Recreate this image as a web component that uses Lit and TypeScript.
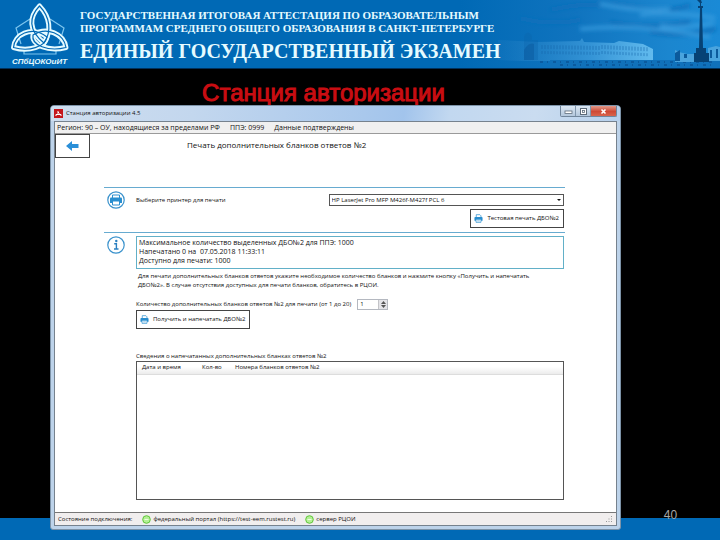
import { LitElement, html, css, svg } from "lit";
import { customElement, state } from "lit/decorators.js";

const printer = (cls: string) => html`<svg class=${cls} viewBox="0 0 20 20" aria-hidden="true">
  <path d="M5 7V1.500h8l2.500 2.500V7" fill="#fff" stroke="#2a8fd0" stroke-width="1.600" />
  <path d="M3 6.500h14a2 2 0 0 1 2 2V15h-3.500v-3h-11v3H1V8.500a2 2 0 0 1 2-2z" fill="#2a8fd0" />
  <path d="M4.500 12h11v6.500h-11z" fill="#fff" stroke="#2a8fd0" stroke-width="1.600" />
  <path d="M7 15.200h6" stroke="#2a8fd0" stroke-width="1.200" />
</svg>`;

@customElement("site-banner")
class SiteBanner extends LitElement {
  static styles = css`
    :host {
      display: flex;
      position: relative;
      height: 69px;
      background: #0069b5;
      border-bottom: 1px solid #00315c;
      box-sizing: border-box;
      overflow: hidden;
      color: #e6fbff;
    }
    .logo { width: 80px; height: 68px; flex: none; }
    .texts { padding-top: 9px; font-family: "Liberation Serif", serif; font-weight: 700; white-space: nowrap; z-index: 1; }
    .small { margin: 0; font-size: 11px; line-height: 13px; }
    .big { margin: 0; padding-top: 4px; font-size: 20px; line-height: 24px; }
    .scene { position: absolute; right: 0; top: 0; width: 260px; height: 68px; }
    .mark { font: italic 700 8px "Liberation Sans", sans-serif; }
  `;
  render() {
    const windows = [];
    for (let i = 0; i < 36; i++) windows.push(svg`<path d=${`M${82 + i * 3} ${45 + (i < 20 ? i * 0.05 : (i - 20) * 0.15)}v4m0 2v3`} />`);
    const loops = [
      "M39.500 6C29 17 28 30 44 43C52 31 50 17 39.500 6z",
      "M13.500 47.500C14 35 31 25 47 37C45 47 29 52 13.500 47.500z",
      "M66 47.500C64 34 47 26 33 35C31 45 48 52 66 47.500z",
    ];
    return html`
      <svg class="logo" viewBox="0 0 80 68" role="img" aria-label="СПбЦОКОиИТ">
        <path d="M30 19L16 28l5 16M50 19l14 9-5 16M24 51v3h32v-3" fill="none" stroke="#7cc5ee" stroke-width="1.200" />
        <g fill="none" stroke="#e6fbff" stroke-width="5" stroke-linejoin="round">${loops.map((d) => svg`<path d=${d} />`)}</g>
        <g fill="none" stroke="#0069b5" stroke-width="1.200" stroke-linejoin="round">${loops.map((d) => svg`<path d=${d} />`)}</g>
        <text class="mark" x="39.500" y="64" text-anchor="middle" fill="#e6fbff">СПбЦОКОиИТ</text>
      </svg>
      <div class="texts">
        <p class="small">ГОСУДАРСТВЕННАЯ ИТОГОВАЯ АТТЕСТАЦИЯ ПО ОБРАЗОВАТЕЛЬНЫМ</p>
        <p class="small">ПРОГРАММАМ СРЕДНЕГО ОБЩЕГО ОБРАЗОВАНИЯ В САНКТ-ПЕТЕРБУРГЕ</p>
        <p class="big">ЕДИНЫЙ ГОСУДАРСТВЕННЫЙ ЭКЗАМЕН</p>
      </div>
      <svg class="scene" viewBox="0 0 260 68" aria-hidden="true">
        <defs>
          <linearGradient id="sky"><stop offset="0" stop-color="#0069b5" /><stop offset=".45" stop-color="#1074bf" /><stop offset=".8" stop-color="#1b86cf" /><stop offset="1" stop-color="#1a8ad6" /></linearGradient>
          <linearGradient id="wall"><stop offset="0" stop-color="#2580c4" stop-opacity=".2" /><stop offset=".6" stop-color="#3494d6" /><stop offset="1" stop-color="#62bbee" /></linearGradient>
          <filter id="soft"><feGaussianBlur stdDeviation="2" /></filter>
        </defs>
        <rect width="260" height="68" fill="url(#sky)" />
        <g filter="url(#soft)" fill="none">
          <path d="M90 10q40-9 80-3t60-2M150 22q30 8 80 0M190 32q30 6 66-3M60 18q30 8 60 2" stroke="#0f70bb" stroke-width="4" />
          <path d="M140 4q40 8 70 5M180 15q30-4 75 3M120 29q60-6 130 8M200 26q20 3 54-3" stroke="#3a9ee0" stroke-width="3" />
        </g>
        <path d="M38 40l40 2 42-1 2-3 2 4 30 1 5-2 24 3 10 5v12H62l-24-1z" fill="url(#wall)" />
        <g stroke="#1566ab" stroke-width="1" opacity=".6">${windows}</g>
        <path d="M64 36q4-7 8 0v4h6v20H64z" fill="#0c65ab" opacity=".35" />
        <path d="M64 50q5-8 10-6v16H64z" fill="#0a5a9d" opacity=".5" />
        <path d="M90 60h170v8H90z" fill="#1071bb" />
        <path d="M80 62h175M100 65h155" stroke="#0a5396" stroke-width="2" stroke-dasharray="3 4 1 5" opacity=".7" />
        <path d="M215 50l4 2 8 2 8 0v8h-20zM248 48l8-2 4 1v14h-12z" fill="#4aa4de" />
        <path d="M215 53l5-3v11h-5zM224 54h3v4h-3zM250 50h2v8h-2zM256 49h2v9h-2z" fill="#0b5a9c" />
        <path d="M237 0h4l1 3h-1v3h2v2h-1l1 40h3v5h3v9h-15v-9h2v-5h3l1-40h-2V6h2V3z" fill="#064275" />
      </svg>`;
  }
}

@customElement("station-window")
class StationWindow extends LitElement {
  static styles = css`
    :host {
      display: flex;
      flex-direction: column;
      box-sizing: border-box;
      border: 1px solid #7d93a8;
      border-radius: 4px 4px 3px 3px;
      background: #bdd3ea;
      padding: 0 3px 3px;
      font-family: "Open Sans", "Noto Sans", sans-serif;
      font-size: 6px;
      line-height: 9px;
      color: #111;
    }
    * { box-sizing: border-box; }
    p, h2 { margin: 0; font-weight: 400; }
    button, select, input { font: inherit; color: inherit; margin: 0; border-radius: 0; }
    .titlebar {
      display: flex;
      align-items: center;
      gap: 3px;
      height: 15px;
      margin: 0 -3px;
      padding: 0 3px;
      border-radius: 3px 3px 0 0;
      background: linear-gradient(100deg, #cfdeef 0, #c3d7ee 25%, #a9c8ec 55%, #a2c4ec 62%, #c2d8f0 70%, #cadcf0 85%, #b6d0ec 100%);
    }
    .app { width: 9px; height: 9px; }
    .caption { flex: 1; }
    .controls { display: flex; align-self: flex-start; border: 1px solid #71869c; border-top: 0; border-radius: 0 0 2px 2px; }
    .ctl { display: flex; align-items: center; justify-content: center; width: 15px; height: 10px; padding: 0; border: 0; border-right: 1px solid #8096ac; background: linear-gradient(#dbe7f3, #b3c7dc); }
    .close { width: 25px; border-right: 0; background: linear-gradient(#e39a8a, #cf4a35 55%, #d9644c); }
    .ctl svg { width: 9px; height: 7px; }
    .client { flex: 1; display: flex; flex-direction: column; border: 1px solid #76828e; background: #fff; }
    .region { display: flex; gap: 10px; height: 12px; padding: 0 2px; align-items: center; background: #f0f0f0; border-bottom: 1px solid #9a9a9a; font-size: 7px; white-space: pre; }
    .head { display: flex; align-items: center; gap: 97px; }
    .back { width: 35px; height: 24px; padding: 0; border: 1px solid #444; background: #fff; display: flex; align-items: center; justify-content: center; }
    .back svg { width: 13px; height: 10px; }
    .head h2 { font-size: 8px; line-height: 12px; padding-bottom: 2px; }
    .body { flex: 1; display: flex; flex-direction: column; padding: 29px 51px 12px 49px; }
    .section { display: grid; grid-template-columns: 32px 1fr; border-top: 1px solid #67abd0; }
    .section > svg { width: 18px; height: 18px; margin: 3px; }
    .printer { display: flex; flex-direction: column; align-items: flex-end; gap: 3px; padding: 6px 1px 4px 0; }
    .row { display: flex; align-items: center; width: 100%; }
    .row label { flex: 1; }
    .pick { position: relative; flex: 0 0 55%; display: flex; }
    select { appearance: none; width: 100%; height: 12px; padding: 0 2px; border: 1px solid #555; background: #fff; }
    .pick::after { content: ""; position: absolute; right: 3px; top: 5px; border: 2px solid transparent; border-top-color: #111; border-bottom: 0; pointer-events: none; }
    .action { display: flex; align-items: center; gap: 4px; height: 19px; padding: 0 4px 0 3px; border: 1px solid #444; background: #fff; white-space: nowrap; }
    .glyph { width: 9px; height: 9px; }
    .details { padding: 3px 1px 0 0; }
    .info { border: 1px solid #62b0c8; padding: 1px 2px 2px; height: 33px; font-size: 7px; line-height: 9px; white-space: pre; }
    .hint { padding: 3px 20px 9px 2px; }
    .count { display: flex; align-items: center; gap: 6px; height: 11px; }
    .spin { display: flex; width: 31px; height: 11px; border: 1px solid #b4b8c0; }
    .spin input { flex: 1; min-width: 0; border: 0; padding: 0 2px; appearance: textfield; background: #fff; outline: 0; }
    .spin input::-webkit-inner-spin-button { display: none; }
    .arrows { display: flex; flex-direction: column; width: 9px; border-left: 1px solid #c4c4c8; }
    .arrows button { flex: 1; min-height: 0; padding: 0; border: 0; background: #e4e4e8; display: flex; align-items: center; justify-content: center; }
    .arrows svg { width: 5px; height: 3px; display: block; }
    .table-area { flex: 1; display: flex; flex-direction: column; margin: 23px 1px 0 32px; }
    .frame { flex: 1; min-height: 100px; border: 1px solid #555; }
    table { width: 100%; border-collapse: collapse; table-layout: fixed; }
    th { height: 12px; padding: 0 5px; text-align: left; font-weight: 400; background: linear-gradient(#fff 40%, #ececec); border-bottom: 1px solid #ddd; }
    .date { width: 60px; }
    .qty { width: 33px; }
    .status { display: flex; align-items: center; height: 13px; padding: 0 3px; gap: 10px; background: #f1eeee; border-top: 1px solid #777; }
    .link { display: flex; align-items: center; gap: 2px; }
    .link svg { width: 9px; height: 9px; }
    .grip { margin-left: auto; width: 7px; height: 7px; }
  `;

  @state() private copies = 1;

  private step(n: number) {
    this.copies = Math.min(20, Math.max(1, this.copies + n));
  }

  render() {
    const dot = html`<svg viewBox="0 0 9 9" aria-hidden="true"><circle cx="4.500" cy="4.500" r="3.800" fill="#b5f096" stroke="#5fc63a" stroke-width="1" /><path d="M2.500 4.500h4" stroke="#e9ffde" /></svg>`;
    return html`
      <header class="titlebar">
        <svg class="app" viewBox="0 0 9 9" aria-hidden="true"><rect width="9" height="9" fill="#c4161c" /><path d="M2 7V5.500h5V7M4 2v3M5.500 4.500L4 3" stroke="#fff" fill="none" /></svg>
        <span class="caption">Станция авторизации 4.5</span>
        <div class="controls">
          <button class="ctl" aria-label="Свернуть"><svg viewBox="0 0 9 7"><rect x="1" y="3" width="7" height="2.500" fill="#fff" stroke="#5d6b7a" stroke-width=".8" /></svg></button>
          <button class="ctl" aria-label="Развернуть"><svg viewBox="0 0 9 7"><rect x="1.500" y=".5" width="6" height="6" fill="#fff" stroke="#5d6b7a" /><rect x="3.500" y="2.500" width="2" height="2" fill="none" stroke="#5d6b7a" stroke-width=".8" /></svg></button>
          <button class="ctl close" aria-label="Закрыть"><svg viewBox="0 0 9 7"><path d="M2.500 1.500l4 4M6.500 1.500l-4 4" stroke="#fff" stroke-width="1.600" /></svg></button>
        </div>
      </header>
      <div class="client">
        <div class="region"><span>Регион: 90 – ОУ, находящиеся за пределами РФ</span><span>ППЭ: 0999</span><span>Данные подтверждены</span></div>
        <div class="head">
          <button class="back" aria-label="Назад"><svg viewBox="0 0 13 10"><path d="M0 5l6-5v3h6.500v4H6v3z" fill="#2a8fd8" /></svg></button>
          <h2>Печать дополнительных бланков ответов №2</h2>
        </div>
        <div class="body">
          <section class="section">
            <svg viewBox="0 0 18 18" aria-hidden="true">
              <circle cx="9" cy="9" r="8.200" fill="#fff" stroke="#3a92cc" stroke-width="1.200" />
              <path d="M5.500 7V4h7v3" fill="#fff" stroke="#2a8fd0" />
              <path d="M4 6.500h10a1 1 0 0 1 1 1V12H3V7.500a1 1 0 0 1 1-1z" fill="#2a8fd0" />
              <path d="M5.500 10h7v4h-7z" fill="#fff" stroke="#2a8fd0" />
            </svg>
            <div class="printer">
              <div class="row">
                <label for="printer">Выберите принтер для печати</label>
                <div class="pick"><select id="printer"><option>HP LaserJet Pro MFP M426f-M427f PCL 6</option></select></div>
              </div>
              <button class="action">${printer("glyph")}Тестовая печать ДБО№2</button>
            </div>
          </section>
          <section class="section">
            <svg viewBox="0 0 18 18" aria-hidden="true">
              <circle cx="9" cy="9" r="8.200" fill="#fff" stroke="#3a92cc" stroke-width="1.200" />
              <circle cx="9.300" cy="5" r="1.200" fill="#2a7fc0" />
              <path d="M7.200 7.800h2.200v5M7 13h4.500" fill="none" stroke="#2a7fc0" stroke-width="1.400" />
            </svg>
            <div class="details">
              <div class="info"><p>Максимальное количество выделенных ДБО№2 для ППЭ: 1000</p><p>Напечатано 0 на  07.05.2018 11:33:11</p><p>Доступно для печати: 1000</p></div>
              <p class="hint">Для печати дополнительных бланков ответов укажите необходимое количество бланков и нажмите кнопку «Получить и напечатать ДБО№2». В случае отсутствия доступных для печати бланков, обратитесь в РЦОИ.</p>
              <div class="count">
                <label for="copies">Количество дополнительных бланков ответов №2 для печати (от 1 до 20)</label>
                <div class="spin">
                  <input id="copies" type="number" min="1" max="20" .value=${String(this.copies)} @change=${(e: Event) => (this.copies = Number((e.target as HTMLInputElement).value) || 1)} />
                  <span class="arrows">
                    <button aria-label="Больше" @click=${() => this.step(1)}><svg viewBox="0 0 5 3"><path d="M0 3l2.500-3L5 3z" fill="#555" /></svg></button>
                    <button aria-label="Меньше" @click=${() => this.step(-1)}><svg viewBox="0 0 5 3"><path d="M0 0l2.500 3L5 0z" fill="#555" /></svg></button>
                  </span>
                </div>
              </div>
              <button class="action">${printer("glyph")}Получить и напечатать ДБО№2</button>
            </div>
          </section>
          <div class="table-area">
            <p id="printed">Сведения о напечатанных дополнительных бланках ответов №2</p>
            <div class="frame">
              <table aria-labelledby="printed">
                <thead><tr><th class="date">Дата и время</th><th class="qty">Кол-во</th><th>Номера бланков ответов №2</th></tr></thead>
                <tbody></tbody>
              </table>
            </div>
          </div>
        </div>
        <footer class="status">
          <span>Состояние подключения:</span>
          <span class="link">${dot}федеральный портал (https://test-eem.rustest.ru)</span>
          <span class="link">${dot}сервер РЦОИ</span>
          <svg class="grip" viewBox="0 0 7 7" aria-hidden="true"><path d="M5 0h1v1H5zM5 2.500h1v1H5zM2.500 2.500h1v1h-1zM5 5h1v1H5zM2.500 5h1v1h-1zM0 5h1v1H0z" fill="#999" /></svg>
        </footer>
      </div>`;
  }
}

@customElement("app-root")
class AppRoot extends LitElement {
  static styles = css`
    :host {
      display: flex;
      flex-direction: column;
      min-height: 100vh;
      box-sizing: border-box;
      padding-bottom: 10px;
      background: linear-gradient(to top, #0069b5 22px, #000 22px);
    }
    .slide { flex: 1; display: grid; grid-template-columns: 50px minmax(0, 1fr) 99px; grid-template-rows: 36px 1fr; }
    h1 {
      grid-column: 2;
      margin: 0;
      padding: 10px 24px 0 0;
      text-align: center;
      font: 400 24px/28px "Liberation Sans", Arial, sans-serif;
      color: #c90d12;
      -webkit-text-stroke: 1px #c90d12;
    }
    station-window { grid-column: 2; grid-row: 2; }
    .number { grid-column: 3; grid-row: 2; place-self: end center; padding-bottom: 8px; font: 12px/14px "Liberation Sans", sans-serif; color: #a8a8a8; }
  `;
  render() {
    return html`
      <site-banner></site-banner>
      <main class="slide">
        <h1>Станция авторизации</h1>
        <station-window></station-window>
        <span class="number">40</span>
      </main>`;
  }
}
